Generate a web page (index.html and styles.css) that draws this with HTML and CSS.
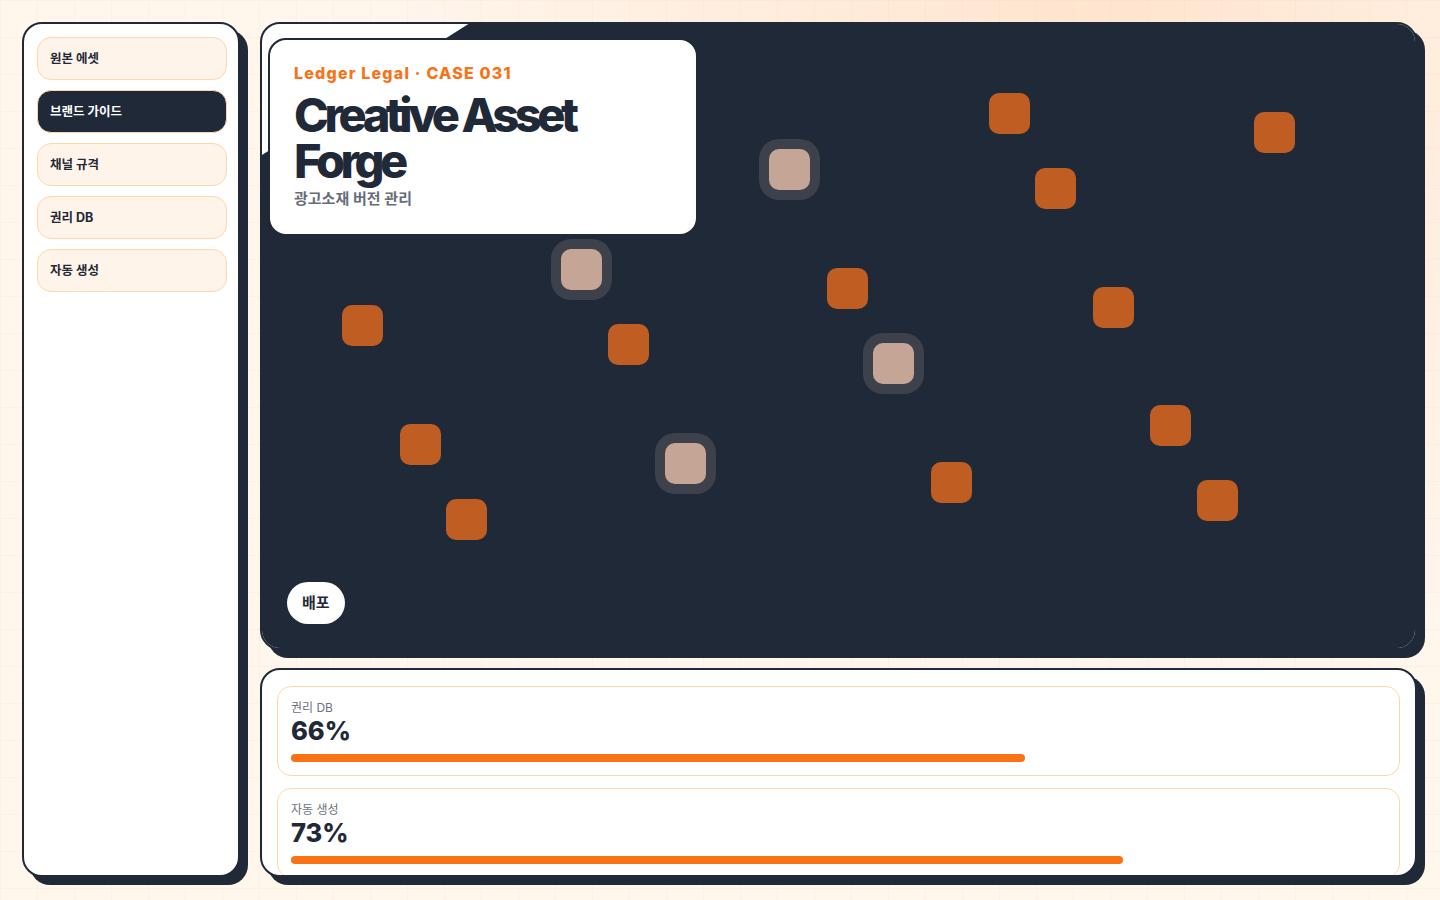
FILE: index.html
```html
<!DOCTYPE html>
<html lang="ko">
<head>
  <meta charset="UTF-8">
  <meta name="viewport" content="width=device-width, initial-scale=1.0">
  <title>Creative Asset Forge</title>
  <link rel="stylesheet" href="styles.css">
</head>
<body>
  <div class="app">
    <aside class="sidebar">
      <a class="nav-item">원본 에셋</a>
      <a class="nav-item active">브랜드 가이드</a>
      <a class="nav-item">채널 규격</a>
      <a class="nav-item">권리 DB</a>
      <a class="nav-item">자동 생성</a>
    </aside>

    <main class="main">
      <section class="stage">
        <div class="canvas">
          <span class="tile" style="left: 727px; top: 69px;"></span>
          <span class="tile" style="left: 992px; top: 88px;"></span>
          <span class="tile" style="left: 773px; top: 144px;"></span>
          <span class="tile" style="left: 565px; top: 244px;"></span>
          <span class="tile" style="left: 831px; top: 263px;"></span>
          <span class="tile" style="left: 80px; top: 281px;"></span>
          <span class="tile" style="left: 346px; top: 300px;"></span>
          <span class="tile" style="left: 138px; top: 400px;"></span>
          <span class="tile" style="left: 888px; top: 381px;"></span>
          <span class="tile" style="left: 669px; top: 438px;"></span>
          <span class="tile" style="left: 935px; top: 456px;"></span>
          <span class="tile" style="left: 184px; top: 475px;"></span>
          <span class="tile picked" style="left: 507px; top: 125px;"></span>
          <span class="tile picked" style="left: 299px; top: 225px;"></span>
          <span class="tile picked" style="left: 611px; top: 319px;"></span>
          <span class="tile picked" style="left: 403px; top: 419px;"></span>
        </div>

        <div class="hero">
          <div class="eyebrow">Ledger Legal · CASE 031</div>
          <h1>Creative Asset Forge</h1>
          <p class="subtitle">광고소재 버전 관리</p>
        </div>

        <button class="deploy">배포</button>
      </section>

      <section class="stats">
        <div class="stat">
          <div class="stat-label">권리 DB</div>
          <div class="stat-value">66%</div>
          <div class="bar" style="width: 67%;"></div>
        </div>
        <div class="stat">
          <div class="stat-label">자동 생성</div>
          <div class="stat-value">73%</div>
          <div class="bar" style="width: 76%;"></div>
        </div>
      </section>
    </main>
  </div>
</body>
</html>
```

FILE: styles.css
```css
* {
  box-sizing: border-box;
}
body {
  margin: 0;
  font-family: Inter, "Noto Sans CJK KR", sans-serif;
  color: #1f2937;
  background-color: #fff6ec;
  background-image:
    linear-gradient(rgba(249, 115, 22, 0.045) 1px, transparent 1px),
    linear-gradient(90deg, rgba(249, 115, 22, 0.045) 1px, transparent 1px),
    radial-gradient(circle at 76% 0%, #ffe5d0 0, rgba(255, 229, 208, 0) 50%);
  background-size: 37px 37px, 37px 37px, auto;
}
.app {
  display: grid;
  grid-template-columns: 218px 1fr;
  column-gap: 20px;
  height: 900px;
  padding: 22px 23px 23px 22px;
}
.sidebar {
  display: flex;
  flex-direction: column;
  gap: 10px;
  padding: 13px 11px 13px 13px;
  background: #fff;
  border: 2px solid #1f2937;
  border-radius: 20px;
  box-shadow: 8px 8px 0 #1f2937;
}
.nav-item {
  display: flex;
  align-items: center;
  height: 43px;
  padding: 0 12px 3px;
  background: #fff4ea;
  border: 1px solid #fed7aa;
  border-radius: 14px;
  font-size: 12.5px;
  font-weight: 700;
  color: #1f2937;
}
.nav-item.active {
  background: #1f2937;
  color: #fff;
}
.main {
  display: grid;
  grid-template-rows: 1fr 209px;
  row-gap: 18px;
  min-width: 0;
}
.stage {
  position: relative;
  display: flex;
  flex-direction: column;
  align-items: flex-start;
  padding: 14px 0 24px 0;
  background: #fff;
  border: 2px solid #1f2937;
  border-radius: 20px;
  box-shadow: 8px 8px 0 #1f2937;
  overflow: hidden;
}
.canvas {
  position: absolute;
  inset: 0;
  background: #1f2937;
  clip-path: polygon(0 21%, 17.9% 0, 100% 0, 100% 100%, 0 100%);
}
.tile {
  position: absolute;
  width: 41px;
  height: 41px;
  border-radius: 10px;
  background: #c05d22;
}
.tile.picked {
  background: #c4a596;
  box-shadow: 0 0 0 10px #3c414b;
}
.hero {
  position: relative;
  width: 430px;
  margin-left: 6px;
  padding: 23px 24px 25px;
  background: #fff;
  border: 2px solid #1f2937;
  border-radius: 18px;
}
.eyebrow {
  font-size: 16px;
  line-height: 20px;
  font-weight: 800;
  letter-spacing: 0.075em;
  color: #f97316;
}
.hero h1 {
  margin: 9px 0 0;
  font-size: 47px;
  line-height: 46px;
  font-weight: 800;
  letter-spacing: -0.095em;
  width: 300px;
}
.subtitle {
  margin: 5px 0 0;
  font-size: 15px;
  line-height: 20px;
  font-weight: 600;
  color: #666d79;
}
.deploy {
  position: relative;
  margin: auto 0 0 25px;
  height: 42px;
  padding: 0 15px 3px;
  border: none;
  border-radius: 21px;
  background: #fff;
  color: #1f2937;
  font-family: inherit;
  font-size: 15px;
  font-weight: 700;
}
.stats {
  display: flex;
  flex-direction: column;
  gap: 12px;
  padding: 16px 15px;
  background: #fff;
  border: 2px solid #1f2937;
  border-radius: 20px;
  box-shadow: 8px 8px 0 #1f2937;
  overflow: hidden;
}
.stat {
  flex-shrink: 0;
  padding: 13px 13px;
  border: 1px solid #fed7aa;
  border-radius: 14px;
}
.stat-label {
  font-size: 12px;
  line-height: 16px;
  color: #6b7280;
}
.stat-value {
  font-size: 25.5px;
  line-height: 30px;
  font-weight: 800;
}
.bar {
  height: 8px;
  margin-top: 8px;
  border-radius: 4px;
  background: #f97316;
}
```
